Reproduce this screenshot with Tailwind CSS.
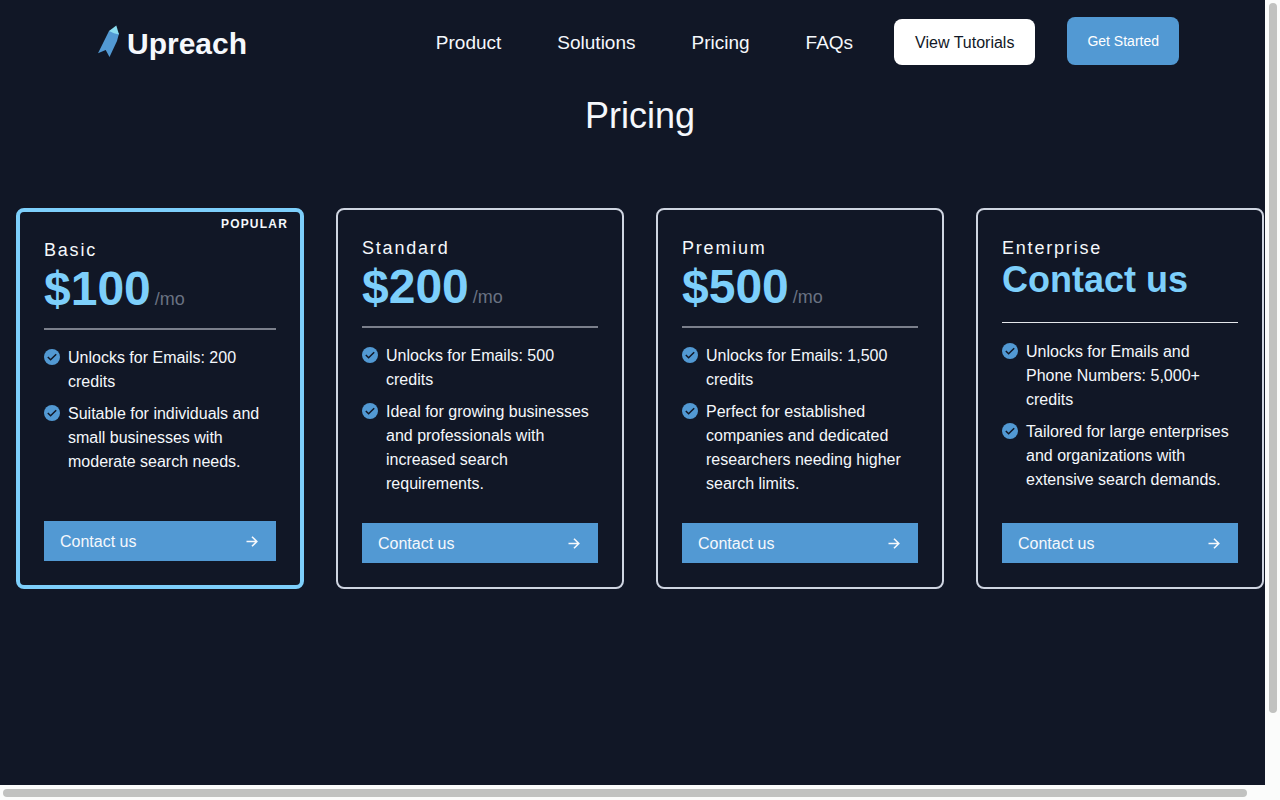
<!DOCTYPE html>
<html lang="en">
<head>
    <meta charset="UTF-8">
    <meta name="viewport" content="width=device-width, initial-scale=1.0">
    <title>Upreach - Pricing</title>
    <script src="https://cdn.jsdelivr.net/npm/@tailwindcss/browser@4"></script>
</head>
<body class="min-h-screen bg-[#111726] text-[#f5f8fc] font-['Liberation_Sans',Arial,sans-serif]">
    <header class="flex items-end justify-between pt-[17px] pl-[97px] pr-[101px]">
        <a href="#" class="flex items-center gap-2">
            <svg class="w-[22px] h-8 -mt-1.5" viewBox="0 0 22 32" aria-hidden="true">
                <path fill="#5299d3" d="M12 6 L17 5 L22 8.500 L20 16 L12.500 32 L8.700 25 L1 28.300 Z" />
                <path fill="#8adcf0" d="M19.300 0.500 L22 9.500 L17 8.200 L12 6 Z" />
            </svg>
            <span class="text-[30px] leading-[42px] font-bold">Upreach</span>
        </a>
        <div class="flex items-end gap-8">
            <nav class="flex items-center gap-14">
                <a href="#" class="pt-0.5 text-[19px] leading-7">Product</a>
                <a href="#" class="pt-0.5 text-[19px] leading-7">Solutions</a>
                <a href="#" class="pt-0.5 text-[19px] leading-7">Pricing</a>
                <a href="#" class="pt-0.5 text-[19px] leading-7">FAQs</a>
                <button class="-ml-[15px] rounded-lg bg-white px-[21px] pt-3 pb-2.5 text-base text-[#111726]">View Tutorials</button>
            </nav>
            <button class="rounded-lg bg-[#5299d3] px-5 py-[14px] text-sm text-white">Get Started</button>
        </div>
    </header>

    <main>
        <h1 class="mt-[31px] text-center text-4xl">Pricing</h1>

        <div class="mt-[72px] grid grid-cols-4 gap-8 px-4">
            <!-- Basic -->
            <section class="relative flex flex-col rounded-lg border-4 border-[#7dcffb] p-6">
                <span class="absolute top-1 right-3 text-xs font-bold tracking-widest">POPULAR</span>
                <h2 class="text-lg leading-7 tracking-widest">Basic</h2>
                <p class="flex items-end gap-1 border-b-2 border-[#7b7f8b] pb-[14px] text-5xl leading-[50px] font-bold text-[#7dcffb]">$100 <span class="text-lg leading-[30px] font-normal text-gray-500">/mo</span></p>
                <ul class="mt-4 space-y-2">
                    <li class="flex gap-2">
                        <svg class="mt-[3px] size-4 shrink-0" viewBox="0 0 16 16" aria-hidden="true"><circle cx="8" cy="8" r="8" fill="#5299d3" /><path d="M3.800 8 L6.600 10.800 L12.200 5.200" fill="none" stroke="#111726" stroke-width="1.500" /></svg>
                        <span>Unlocks for Emails: 200 credits</span>
                    </li>
                    <li class="flex gap-2">
                        <svg class="mt-[3px] size-4 shrink-0" viewBox="0 0 16 16" aria-hidden="true"><circle cx="8" cy="8" r="8" fill="#5299d3" /><path d="M3.800 8 L6.600 10.800 L12.200 5.200" fill="none" stroke="#111726" stroke-width="1.500" /></svg>
                        <span>Suitable for individuals and small businesses with moderate search needs.</span>
                    </li>
                </ul>
                <div class="mt-auto pt-[27px]">
                    <button class="flex w-full items-center justify-between bg-[#5299d3] px-4 pt-[9px] pb-[7px]">Contact us
                        <svg class="size-4" viewBox="0 0 16 16" fill="none" stroke="currentColor" stroke-width="1.600" aria-hidden="true"><path d="M2.500 7.500 H12.800 M8 2.700 L12.800 7.500 L8 12.300" /></svg>
                    </button>
                </div>
            </section>

            <!-- Standard -->
            <section class="flex flex-col rounded-lg border-2 border-[#cfd5e1] p-6">
                <h2 class="text-lg leading-7 tracking-widest">Standard</h2>
                <p class="flex items-end gap-1 border-b-2 border-[#7b7f8b] pb-[14px] text-5xl leading-[50px] font-bold text-[#7dcffb]">$200 <span class="text-lg leading-[30px] font-normal text-gray-500">/mo</span></p>
                <ul class="mt-4 space-y-2">
                    <li class="flex gap-2">
                        <svg class="mt-[3px] size-4 shrink-0" viewBox="0 0 16 16" aria-hidden="true"><circle cx="8" cy="8" r="8" fill="#5299d3" /><path d="M3.800 8 L6.600 10.800 L12.200 5.200" fill="none" stroke="#111726" stroke-width="1.500" /></svg>
                        <span>Unlocks for Emails: 500 credits</span>
                    </li>
                    <li class="flex gap-2">
                        <svg class="mt-[3px] size-4 shrink-0" viewBox="0 0 16 16" aria-hidden="true"><circle cx="8" cy="8" r="8" fill="#5299d3" /><path d="M3.800 8 L6.600 10.800 L12.200 5.200" fill="none" stroke="#111726" stroke-width="1.500" /></svg>
                        <span>Ideal for growing businesses and professionals with increased search requirements.</span>
                    </li>
                </ul>
                <div class="mt-auto pt-[27px]">
                    <button class="flex w-full items-center justify-between bg-[#5299d3] px-4 pt-[9px] pb-[7px]">Contact us
                        <svg class="size-4" viewBox="0 0 16 16" fill="none" stroke="currentColor" stroke-width="1.600" aria-hidden="true"><path d="M2.500 7.500 H12.800 M8 2.700 L12.800 7.500 L8 12.300" /></svg>
                    </button>
                </div>
            </section>

            <!-- Premium -->
            <section class="flex flex-col rounded-lg border-2 border-[#cfd5e1] p-6">
                <h2 class="text-lg leading-7 tracking-widest">Premium</h2>
                <p class="flex items-end gap-1 border-b-2 border-[#7b7f8b] pb-[14px] text-5xl leading-[50px] font-bold text-[#7dcffb]">$500 <span class="text-lg leading-[30px] font-normal text-gray-500">/mo</span></p>
                <ul class="mt-4 space-y-2">
                    <li class="flex gap-2">
                        <svg class="mt-[3px] size-4 shrink-0" viewBox="0 0 16 16" aria-hidden="true"><circle cx="8" cy="8" r="8" fill="#5299d3" /><path d="M3.800 8 L6.600 10.800 L12.200 5.200" fill="none" stroke="#111726" stroke-width="1.500" /></svg>
                        <span>Unlocks for Emails: 1,500 credits</span>
                    </li>
                    <li class="flex gap-2">
                        <svg class="mt-[3px] size-4 shrink-0" viewBox="0 0 16 16" aria-hidden="true"><circle cx="8" cy="8" r="8" fill="#5299d3" /><path d="M3.800 8 L6.600 10.800 L12.200 5.200" fill="none" stroke="#111726" stroke-width="1.500" /></svg>
                        <span>Perfect for established companies and dedicated researchers needing higher search limits.</span>
                    </li>
                </ul>
                <div class="mt-auto pt-[27px]">
                    <button class="flex w-full items-center justify-between bg-[#5299d3] px-4 pt-[9px] pb-[7px]">Contact us
                        <svg class="size-4" viewBox="0 0 16 16" fill="none" stroke="currentColor" stroke-width="1.600" aria-hidden="true"><path d="M2.500 7.500 H12.800 M8 2.700 L12.800 7.500 L8 12.300" /></svg>
                    </button>
                </div>
            </section>

            <!-- Enterprise -->
            <section class="flex flex-col rounded-lg border-2 border-[#cfd5e1] p-6">
                <h2 class="text-lg leading-7 tracking-widest">Enterprise</h2>
                <p class="border-b border-gray-200 pb-6 text-4xl leading-9 font-bold text-[#7dcffb]">Contact us</p>
                <ul class="mt-[17px] space-y-2">
                    <li class="flex gap-2">
                        <svg class="mt-[3px] size-4 shrink-0" viewBox="0 0 16 16" aria-hidden="true"><circle cx="8" cy="8" r="8" fill="#5299d3" /><path d="M3.800 8 L6.600 10.800 L12.200 5.200" fill="none" stroke="#111726" stroke-width="1.500" /></svg>
                        <span>Unlocks for Emails and Phone Numbers: 5,000+ credits</span>
                    </li>
                    <li class="flex gap-2">
                        <svg class="mt-[3px] size-4 shrink-0" viewBox="0 0 16 16" aria-hidden="true"><circle cx="8" cy="8" r="8" fill="#5299d3" /><path d="M3.800 8 L6.600 10.800 L12.200 5.200" fill="none" stroke="#111726" stroke-width="1.500" /></svg>
                        <span>Tailored for large enterprises and organizations with extensive search demands.</span>
                    </li>
                </ul>
                <div class="mt-auto pt-[27px]">
                    <button class="flex w-full items-center justify-between bg-[#5299d3] px-4 pt-[9px] pb-[7px]">Contact us
                        <svg class="size-4" viewBox="0 0 16 16" fill="none" stroke="currentColor" stroke-width="1.600" aria-hidden="true"><path d="M2.500 7.500 H12.800 M8 2.700 L12.800 7.500 L8 12.300" /></svg>
                    </button>
                </div>
            </section>
        </div>
    </main>

    <!-- Scrollbars -->
    <div class="fixed inset-y-0 right-0 w-[15px] bg-[#fbfcfb] py-[3px] pl-1 pr-[3px]">
        <div class="h-[89.4%] rounded-full bg-[#c1c2c0]"></div>
    </div>
    <div class="fixed bottom-0 left-0 right-0 h-[15px] bg-[#fbfcfb] pt-1 pb-[3px] pl-[3px] pr-[33px]">
        <div class="h-full rounded-full bg-[#c1c2c0]"></div>
    </div>
</body>
</html>
